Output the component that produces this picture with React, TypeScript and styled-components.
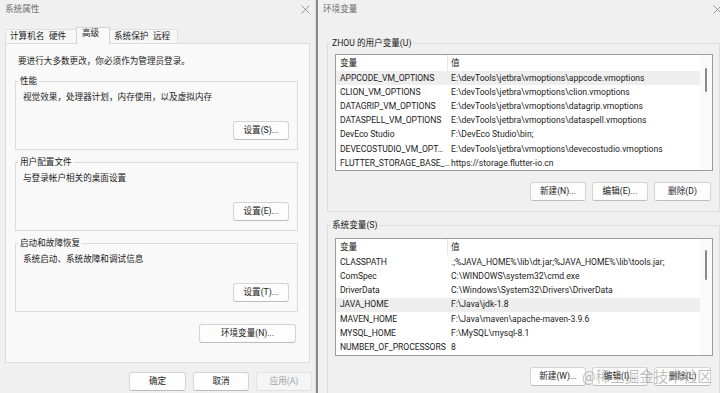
import React from "react";
import styled, { createGlobalStyle } from "styled-components";

const GlobalStyle = createGlobalStyle`
  html, body {
    margin: 0;
    padding: 0;
  }
  body {
    width: 720px;
    height: 393px;
    overflow: hidden;
    background: #f0f0f0;
    color: #1b1b1b;
    font-family: Roboto, "Noto Sans CJK SC", sans-serif;
    font-size: 8.6px;
    line-height: 11px;
  }
`;

const Desktop = styled.div`
  position: relative;
  display: flex;
  width: 720px;
  height: 393px;
  overflow: hidden;
`;

const LeftWindow = styled.div`
  display: flex;
  flex-direction: column;
  flex-shrink: 0;
  width: 316px;
  box-sizing: border-box;
  border-right: 1px solid #dadada;
  background: #f0f0f0;
`;

const RightWindow = styled.div`
  display: flex;
  flex-direction: column;
  flex: 1;
  min-width: 0;
  border-left: 2px solid #838a91;
  background: #f0f0f0;
  overflow: hidden;
`;

const TitleBar = styled.div`
  display: flex;
  align-items: center;
  justify-content: space-between;
  flex-shrink: 0;
  height: 18px;
  padding: 0 5px;
  color: #707070;
`;

const CloseIcon = styled.svg<{ $clip?: boolean }>`
  width: 9px;
  height: 9px;
  flex-shrink: 0;
  margin-right: ${(p) => (p.$clip ? "-7px" : "0")};
`;

const TabStrip = styled.div`
  position: relative;
  z-index: 1;
  display: flex;
  align-items: flex-end;
  height: 17px;
  margin-top: 8px;
  padding-left: 5px;
`;

const Tab = styled.div<{ $w: number; $active?: boolean }>`
  box-sizing: border-box;
  width: ${(p) => p.$w}px;
  height: ${(p) => (p.$active ? 17 : 14)}px;
  margin-bottom: ${(p) => (p.$active ? -1 : 0)}px;
  padding-left: ${(p) => (p.$active ? 5 : 4)}px;
  line-height: ${(p) => (p.$active ? 11 : 13)}px;
  white-space: nowrap;
  background: ${(p) => (p.$active ? "#f9f9f9" : "#f7f7f7")};
  border-top: 1px solid ${(p) => (p.$active ? "#d4d4d4" : "#e0e0e0")};
  border-left: ${(p) => (p.$active ? "1px solid #d4d4d4" : "none")};
  border-right: ${(p) => (p.$active ? "1px solid #d4d4d4" : "none")};

  &:first-child {
    border-left: 1px solid #e0e0e0;
  }
  &:last-child {
    border-right: 1px solid #e0e0e0;
  }
`;

const TabPanel = styled.div`
  display: flex;
  flex-direction: column;
  box-sizing: border-box;
  height: 320px;
  margin: 0 5px;
  padding: 12px 11px 0 9px;
  border: 1px solid #dcdcdc;
  background: #f9f9f9;
`;

const Notice = styled.div`
  padding-left: 3px;
`;

const Group = styled.fieldset<{ $gap: number }>`
  min-width: 0;
  margin: ${(p) => p.$gap}px 0 0;
  padding: 0;
  border: 1px solid #dcdcdc;
`;

const Legend = styled.legend`
  margin-left: 2px;
  padding: 0 2px;
  line-height: 11px;
`;

const GroupBody = styled.div<{ $pad: string }>`
  display: flex;
  flex-direction: column;
  padding: ${(p) => p.$pad};
`;

const Description = styled.div`
  margin-top: 5px;
`;

const ActionRow = styled.div<{ $top: number; $right?: number; $gap?: number }>`
  display: flex;
  justify-content: flex-end;
  gap: ${(p) => p.$gap ?? 6}px;
  margin-top: ${(p) => p.$top}px;
  margin-right: ${(p) => p.$right ?? 0}px;
`;

const Button = styled.button<{ $w: number; $muted?: boolean }>`
  box-sizing: border-box;
  width: ${(p) => p.$w}px;
  height: 19px;
  padding: 0;
  border: 1px solid ${(p) => (p.$muted ? "#e4e4e4" : "#d4d4d4")};
  border-bottom-color: ${(p) => (p.$muted ? "#e0e0e0" : "#bcbcbc")};
  border-radius: 3px;
  background: ${(p) => (p.$muted ? "#f5f5f5" : "#fdfdfd")};
  color: ${(p) => (p.$muted ? "#a2a2a2" : "#1b1b1b")};
  font: inherit;
  line-height: 17px;
  white-space: nowrap;
`;

const Footer = styled.div`
  display: flex;
  justify-content: flex-end;
  gap: 7px;
  padding: 9px 3px 0 0;
`;

const RightContent = styled.div`
  display: flex;
  flex-direction: column;
  padding-left: 9px;
`;

const ListBox = styled.div`
  display: flex;
  border: 1px solid #9c9c9c;
  background: #ffffff;
`;

const ListBody = styled.div`
  flex: 1;
  min-width: 0;
`;

const HeaderRow = styled.div`
  display: flex;
  height: 16px;
`;

const HeaderCell = styled.div<{ $first?: boolean }>`
  display: flex;
  align-items: center;
  box-sizing: border-box;
  width: ${(p) => (p.$first ? "112px" : "auto")};
  flex: ${(p) => (p.$first ? "none" : "1")};
  padding-left: ${(p) => (p.$first ? 4 : 3)}px;
  border-right: ${(p) => (p.$first ? "1px solid #e6e6e6" : "none")};
`;

const Row = styled.div<{ $selected?: boolean }>`
  display: flex;
  align-items: center;
  height: 14.2px;
  background: ${(p) => (p.$selected ? "#eeeeee" : "transparent")};
`;

const Cell = styled.div<{ $first?: boolean }>`
  box-sizing: border-box;
  width: ${(p) => (p.$first ? "112px" : "auto")};
  flex: ${(p) => (p.$first ? "none" : "1")};
  min-width: 0;
  padding-left: ${(p) => (p.$first ? 4 : 3)}px;
  letter-spacing: ${(p) => (p.$first ? "-0.05px" : "0")};
  white-space: nowrap;
`;

const ScrollTrack = styled.div`
  display: flex;
  justify-content: center;
  flex-shrink: 0;
  width: 12px;
  background: #fafafa;
`;

const Thumb = styled.div<{ $top: number; $len: number }>`
  width: 2px;
  height: ${(p) => p.$len}px;
  margin-top: ${(p) => p.$top}px;
  border-radius: 1px;
  background: #8a8a8a;
`;

const Watermark = styled.div`
  position: absolute;
  left: 582px;
  top: 367px;
  font-family: "Noto Sans CJK SC", sans-serif;
  font-size: 14.5px;
  line-height: 18px;
  color: rgba(128, 128, 128, 0.5);
  white-space: nowrap;
  pointer-events: none;
`;

type Env = { name: string; value: string; selected?: boolean };

const userVars: Env[] = [
  { name: "APPCODE_VM_OPTIONS", value: "E:\\devTools\\jetbra\\vmoptions\\appcode.vmoptions", selected: true },
  { name: "CLION_VM_OPTIONS", value: "E:\\devTools\\jetbra\\vmoptions\\clion.vmoptions" },
  { name: "DATAGRIP_VM_OPTIONS", value: "E:\\devTools\\jetbra\\vmoptions\\datagrip.vmoptions" },
  { name: "DATASPELL_VM_OPTIONS", value: "E:\\devTools\\jetbra\\vmoptions\\dataspell.vmoptions" },
  { name: "DevEco Studio", value: "F:\\DevEco Studio\\bin;" },
  { name: "DEVECOSTUDIO_VM_OPT…", value: "E:\\devTools\\jetbra\\vmoptions\\devecostudio.vmoptions" },
  { name: "FLUTTER_STORAGE_BASE_…", value: "https://storage.flutter-io.cn" },
];

const systemVars: Env[] = [
  { name: "CLASSPATH", value: ".;%JAVA_HOME%\\lib\\dt.jar;%JAVA_HOME%\\lib\\tools.jar;" },
  { name: "ComSpec", value: "C:\\WINDOWS\\system32\\cmd.exe" },
  { name: "DriverData", value: "C:\\Windows\\System32\\Drivers\\DriverData" },
  { name: "JAVA_HOME", value: "F:\\Java\\jdk-1.8", selected: true },
  { name: "MAVEN_HOME", value: "F:\\Java\\maven\\apache-maven-3.9.6" },
  { name: "MYSQL_HOME", value: "F:\\MySQL\\mysql-8.1" },
  { name: "NUMBER_OF_PROCESSORS", value: "8" },
];

const Close: React.FC<{ clip?: boolean }> = ({ clip }) => (
  <CloseIcon $clip={clip} viewBox="0 0 9 9">
    <path d="M0.5 0.5 L8.5 8.5 M8.5 0.5 L0.5 8.5" stroke="#8c8c8c" strokeWidth="0.9" fill="none" />
  </CloseIcon>
);

const VarList: React.FC<{ rows: Env[]; thumbTop: number; thumbLen: number }> = ({ rows, thumbTop, thumbLen }) => (
  <ListBox>
    <ListBody>
      <HeaderRow>
        <HeaderCell $first>变量</HeaderCell>
        <HeaderCell>值</HeaderCell>
      </HeaderRow>
      {rows.map((r) => (
        <Row key={r.name} $selected={r.selected}>
          <Cell $first>{r.name}</Cell>
          <Cell>{r.value}</Cell>
        </Row>
      ))}
    </ListBody>
    <ScrollTrack>
      <Thumb $top={thumbTop} $len={thumbLen} />
    </ScrollTrack>
  </ListBox>
);

const groups = [
  { title: "性能", desc: "视觉效果，处理器计划，内存使用，以及虚拟内存", button: "设置(S)...", gap: 9 },
  { title: "用户配置文件", desc: "与登录帐户相关的桌面设置", button: "设置(E)...", gap: 7 },
  { title: "启动和故障恢复", desc: "系统启动、系统故障和调试信息", button: "设置(T)...", gap: 7 },
];

const App: React.FC = () => (
  <Desktop>
    <GlobalStyle />
    <LeftWindow>
      <TitleBar>
        <span>系统属性</span>
        <Close />
      </TitleBar>
      <TabStrip>
        <Tab $w={40}>计算机名</Tab>
        <Tab $w={31}>硬件</Tab>
        <Tab $w={34} $active>
          高级
        </Tab>
        <Tab $w={39}>系统保护</Tab>
        <Tab $w={29}>远程</Tab>
      </TabStrip>
      <TabPanel>
        <Notice>要进行大多数更改，你必须作为管理员登录。</Notice>
        {groups.map((g) => (
          <Group key={g.title} $gap={g.gap}>
            <Legend>{g.title}</Legend>
            <GroupBody $pad="0 8px 9px 7px">
              <Description>{g.desc}</Description>
              <ActionRow $top={18}>
                <Button $w={56}>{g.button}</Button>
              </ActionRow>
            </GroupBody>
          </Group>
        ))}
        <ActionRow $top={12} $right={2}>
          <Button $w={97}>环境变量(N)...</Button>
        </ActionRow>
      </TabPanel>
      <Footer>
        <Button $w={57}>确定</Button>
        <Button $w={56}>取消</Button>
        <Button $w={56} $muted disabled>
          应用(A)
        </Button>
      </Footer>
    </LeftWindow>

    <RightWindow>
      <TitleBar>
        <span>环境变量</span>
        <Close clip />
      </TitleBar>
      <RightContent>
        <Group $gap={20}>
          <Legend>ZHOU 的用户变量(U)</Legend>
          <GroupBody $pad="5px 6px 10px 7px">
            <VarList rows={userVars} thumbTop={13} thumbLen={24} />
            <ActionRow $top={11} $right={2}>
              <Button $w={56}>新建(N)...</Button>
              <Button $w={56}>编辑(E)...</Button>
              <Button $w={57}>删除(D)</Button>
            </ActionRow>
          </GroupBody>
        </Group>
        <Group $gap={8}>
          <Legend>系统变量(S)</Legend>
          <GroupBody $pad="7px 6px 10px 7px">
            <VarList rows={systemVars} thumbTop={11} thumbLen={30} />
            <ActionRow $top={11} $right={2}>
              <Button $w={56}>新建(W)...</Button>
              <Button $w={56}>编辑(I)...</Button>
              <Button $w={57}>删除(L)</Button>
            </ActionRow>
          </GroupBody>
        </Group>
      </RightContent>
    </RightWindow>
    <Watermark>@稀土掘金技术社区</Watermark>
  </Desktop>
);

export default App;
